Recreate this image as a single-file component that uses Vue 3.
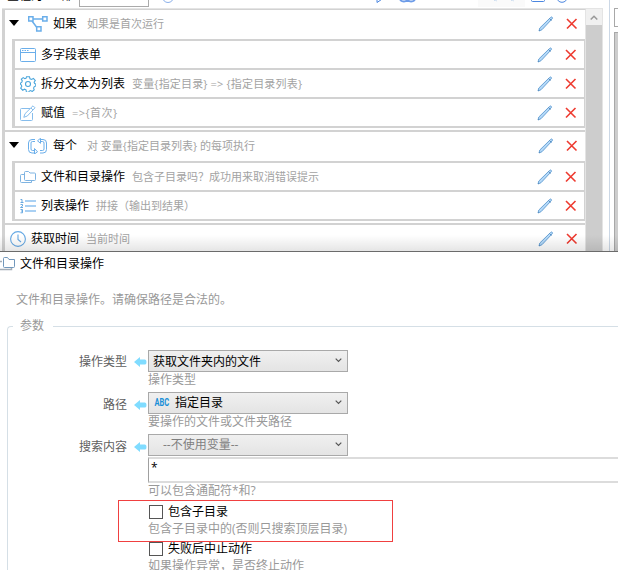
<script setup>
const groups = [
  {
    icon: 'branch', name: '如果', note: '如果是首次运行', noteW: 77,
    children: [
      { icon: 'window', name: '多字段表单', note: '', noteW: 0 },
      { icon: 'gear', name: '拆分文本为列表', note: '变量{指定目录} => {指定目录列表}', noteW: 170 },
      { icon: 'edit', name: '赋值', note: '=>{首次}', noteW: 45 }
    ]
  },
  {
    icon: 'loop', name: '每个', note: '对 变量{指定目录列表} 的每项执行', noteW: 168,
    children: [
      { icon: 'folders', name: '文件和目录操作', note: '包含子目录吗？成功用来取消错误提示', noteW: 187 },
      { icon: 'list', name: '列表操作', note: '拼接（输出到结果）', noteW: 99 }
    ]
  },
  { icon: 'clock', name: '获取时间', note: '当前时间', noteW: 44, children: [] }
]
const fields = [
  { label: '操作类型', value: '获取文件夹内的文件', hint: '操作类型', kind: 'plain' },
  { label: '路径', value: '指定目录', hint: '要操作的文件或文件夹路径', kind: 'variable' },
  { label: '搜索内容', value: '--不使用变量--', hint: '可以包含通配符*和?', kind: 'muted', input: '*' }
]
const checks = [
  { label: '包含子目录', hint: '包含子目录中的(否则只搜索顶层目录)', marked: true },
  { label: '失败后中止动作', hint: '如果操作异常，是否终止动作', marked: false }
]
const icons = {
  branch: '<g fill="none" stroke="#6aaeea" stroke-width="1.500"><path d="M5 3h10M4 5l6 8"/><path d="M.7.7h4.300v4.300H.7zM14.700.7h4.300v4.300h-4.300zM8.700 10.700h4.300v4.300H8.700z" fill="#fff"/></g>',
  loop: '<g fill="none" stroke="#6aaeea" stroke-width="1"><path d="M7 1.500H4Q.5 1.500.5 5v6.500Q.5 15 4 15h2.500M7 3.500H4.500Q3 3.500 3 5v6q0 1.500 1.500 1.500h2M6.500 10.500l3 3.300-3 2.200z"/><path d="M12 15h3q3.500 0 3.500-3.500V5q0-3.500-3.500-3.500h-2.500M12 12.500h2.500Q16 12.500 16 11V5q0-1.500-1.500-1.500h-2M12.500.300v5l-3-2.500z"/></g>',
  window: '<g fill="none" stroke="#6aaeea"><rect x=".5" y="1.500" width="15" height="13" rx="1"/><path d="M1 5.500h14"/><path d="M2 3.500h7" stroke-dasharray="1.500 1"/></g>',
  gear: '<g fill="none" stroke="#4ba6dc" stroke-width="1.100"><path d="M6.500.8h3l.5 2 1.500.7 1.900-1 1.900 2.100-1.200 1.700.6 1.200 1.100.5v2l-1.500.6-.7 1.500.6 1.700-2 1.700-1.600-1-1.300.6-.8 1.300H6.500L6 13.800l-1.500-.6-1.800 1-2-2 1.100-1.900-.6-1.400L.5 8.300V7l1.200-.6.6-1.500-1-1.800L3.200 1.600l1.600 1.100L6 2.300z"/><circle cx="8" cy="8" r="2.500"/></g>',
  edit: '<g fill="none" stroke="#86bdec"><path d="M10 3.500H1.500q-1 0-1 1v10q0 1 1 1h10q1 0 1-1V8"/><path d="M13 .800l2 2-7.700 8.200-3.500 1.300L5 8.700zM11 3l2 2"/></g>',
  folders: '<g fill="none" stroke="#7fb4e2"><path d="M4.500 10.500v-7q0-1 1-1h3L10 4h4.500q1 0 1 1v5.500q0 1-1 1h-9q-1 0-1-1z"/><path d="M4 5.500H1.500q-1 0-1 1v6q0 1 1 1h10V12"/></g>',
  list: '<path d="M5 2h11v2H5zM5 7h11v2H5zM5 12h11v2H5z" fill="#a9d0f3"/><path d="M.5 1.500H2v3M.5 4.500h3M.5 6.500h2v1.500l-2 1.500h2.500M.5 11.500h2v3.300h-2M1 13h1.500" fill="none" stroke="#5aa0dc" stroke-width=".9"/>',
  clock: '<g fill="none" stroke="#66a9e4" stroke-width="1.100"><circle cx="8" cy="8" r="7.400"/><path d="M8 3.500v5l3 2.500"/></g>'
}
const isWide = n => n === 'branch' || n === 'loop'
</script>

<template>
  <div class="screen">
    <section class="workspace">
      <div class="editor">
        <header class="toolbar">
          <span class="tool-title">全程为 少 部:</span>
          <span class="tool-box"></span>
          <svg class="tool-left" width="14" height="8" viewBox="0 0 14 8"><circle cx="7" cy="-3" r="5.500" fill="none" stroke="#8bb0ea" /></svg>
          <svg class="tool-right" width="210" height="8" viewBox="0 0 210 8">
            <path d="M5-2v4.500l6-4" fill="none" stroke="#4b86e0" />
            <path d="M28 0q4 3 7.500 0 3.500 3 7.500 0" fill="none" stroke="#6d9ce8" stroke-width="1.800" />
            <path d="M106 0h47v7h-47z" fill="#fafafa" />
            <path d="M122 1l1-1 2 1M139 1l1-1 2 1" fill="none" stroke="#d0dff0" />
            <path d="M159.500 0v.5q0 1 1 1h11q1 0 1-1V0" fill="none" stroke="#4b86e0" />
            <circle cx="190" cy="-3" r="5.300" fill="none" stroke="#4b86e0" />
          </svg>
        </header>
        <div class="list-area">
          <div class="steps">
            <div v-for="g in groups" :key="g.name" class="group">
              <div class="row" :class="{ leaf: !g.children.length, parent: g.children.length }">
                <svg v-if="g.children.length" class="caret" width="10" height="6" viewBox="0 0 10 6"><path d="M0 0h10L5 6z" fill="#000" /></svg>
                <svg class="glyph" :width="isWide(g.icon) ? 20 : 16" height="16" :viewBox="isWide(g.icon) ? '0 0 20 16' : '0 0 16 16'" v-html="icons[g.icon]"></svg>
                <span class="name">{{ g.name }}</span>
                <svg class="note" :width="g.noteW" height="16"><text x="0" y="12" :textLength="g.noteW">{{ g.note }}</text></svg>
                <span class="actions">
                  <svg width="16" height="16" viewBox="0 0 16 16"><path d="M1 15l.8-3L12.500 1.500q1-1 1.700-.2t-.2 1.700L4 13.700z" fill="#b5d9f8" stroke="#6aa3d6" /><path d="M11.500 2.500l2 2M1 15l1-1" stroke="#5c8fc0" /></svg>
                  <svg width="12" height="12" viewBox="0 0 12 12"><path d="M1 1l9.500 9.500M10.500 1L1 10.500" stroke="#ee3b30" stroke-width="1.600" /></svg>
                </span>
              </div>
              <div v-if="g.children.length" class="nested">
                <div v-for="c in g.children" :key="c.name" class="row child">
                  <svg class="glyph" width="16" height="16" viewBox="0 0 16 16" v-html="icons[c.icon]"></svg>
                  <span class="name">{{ c.name }}</span>
                  <svg v-if="c.note" class="note" :width="c.noteW" height="16"><text x="0" y="12" :textLength="c.noteW">{{ c.note }}</text></svg>
                  <span class="actions">
                    <svg width="16" height="16" viewBox="0 0 16 16"><path d="M1 15l.8-3L12.500 1.500q1-1 1.700-.2t-.2 1.700L4 13.700z" fill="#b5d9f8" stroke="#6aa3d6" /><path d="M11.500 2.500l2 2M1 15l1-1" stroke="#5c8fc0" /></svg>
                    <svg width="12" height="12" viewBox="0 0 12 12"><path d="M1 1l9.500 9.500M10.500 1L1 10.500" stroke="#ee3b30" stroke-width="1.600" /></svg>
                  </span>
                </div>
              </div>
            </div>
          </div>
          <div class="scrollbar">
            <div class="scroll-up"><svg width="8" height="5" viewBox="0 0 8 5"><path d="M.7 4.500L4 1.200l3.300 3.300" fill="none" stroke="#999" stroke-width="1.500" /></svg></div>
            <div class="thumb"></div>
          </div>
        </div>
      </div>
      <aside class="side">
        <div class="side-input"></div>
        <div class="side-panel"></div>
      </aside>
      <div class="shade"></div>
    </section>

    <section class="dialog">
      <header class="title">
        <svg width="16" height="16" viewBox="0 0 16 16"><g fill="none" stroke="#7197bb"><path d="M3.500 10.500v-8q0-1 1-1h3L9 3.500h5.500v7q0 1-1 1h-9q-1 0-1-1z" /><path d="M0 5.500h2M0 13.500h11.500V12" stroke="#a4adb6" stroke-width="1.500" /></g></svg>
        <span>文件和目录操作</span>
      </header>
      <p class="intro">文件和目录操作。请确保路径是合法的。</p>
      <div class="params">
        <div class="legend"><span class="corner"></span><span class="legend-text">参数</span><span class="rule"></span></div>
        <div class="form">
          <div v-for="f in fields" :key="f.label" class="field">
            <div class="control">
              <label>{{ f.label }}</label>
              <svg class="arrow" width="13" height="10" viewBox="0 0 13 10"><path d="M0 5l6-5v2.500h5q1.500 0 1.500 2.500T11 7.500H6V10z" fill="#80dcff" /></svg>
              <div class="select" :class="f.kind">
                <span v-if="f.kind === 'variable'" class="type-tag">ABC</span>
                <span class="value">{{ f.value }}</span>
                <svg class="chev" width="7" height="5" viewBox="0 0 7 5"><path d="M.7.7l2.800 2.800L6.300.7" fill="none" stroke="#555" stroke-width="1.200" /></svg>
              </div>
            </div>
            <div v-if="f.input" class="input">{{ f.input }}</div>
            <div class="hint">{{ f.hint }}</div>
          </div>
          <div v-for="c in checks" :key="c.label" class="check">
            <div class="check-line"><span class="box"></span><span>{{ c.label }}</span></div>
            <div class="hint">{{ c.hint }}</div>
            <div v-if="c.marked" class="marker"></div>
          </div>
        </div>
      </div>
    </section>
  </div>
</template>

<style>
body { margin: 0; background: #fff; overflow: hidden; }
</style>

<style scoped>
.screen { width: 618px; height: 570px; overflow: hidden; background: #fff; font: 12px/16px "Open Sans", "Noto Sans CJK SC", sans-serif; color: #000; white-space: nowrap; }
.screen * { box-sizing: border-box; }
svg { display: block; flex: none; }
.workspace { position: relative; display: flex; height: 252px; overflow: hidden; border-bottom: 1px solid #6b6b6b; }
.editor { width: 610px; height: 252px; border-right: 1px solid #ccd8e6; }
.toolbar { display: flex; align-items: flex-start; height: 8px; overflow: hidden; }
.tool-title { width: 72px; padding-left: 7px; margin-top: -12px; }
.tool-box { width: 70px; height: 7px; margin-left: 7px; border: 1px solid #aaa; border-top: 0; }
.tool-left { margin-left: 12px; }
.tool-right { margin-left: 197px; }
.list-area { display: flex; height: 244px; margin-left: 2px; width: 601px; border-top: 1px solid #e4e4e4; border-right: 1px solid #e4e4e4; }
.steps { width: 584px; border-left: 3px solid #d2d2d2; border-top: 1px solid #d2d2d2; border-right: 1px solid #e4e4e4; }
.group + .group { margin-top: 2px; border-top: 2px solid #d2d2d2; }
.row { display: flex; align-items: center; height: 29px; padding: 0 7px 2px 4px; }
.row.leaf { padding: 0 7px 0 5px; height: 28px; }
.caret { margin-right: 9px; margin-top: -2px; }
.glyph { margin-right: 5px; }
.row .name { margin-top: 1px; }
.row.leaf .name { margin-top: 0; }
.note { margin-left: 7px; overflow: visible; font-size: 11px; fill: #a3a3a3; }
.parent .note { margin-left: 10px; }
.actions { display: flex; align-items: center; gap: 12px; margin-left: auto; }
.nested { margin-left: 7px; border: 2px solid #d2d2d2; border-left-width: 3px; border-right-width: 1px; }
.row.child { height: 27px; padding: 0 7px 0 5px; }
.row.child + .row.child { height: 29px; border-top: 2px solid #d2d2d2; }
.scrollbar { width: 16px; }
.scroll-up { display: flex; align-items: center; justify-content: center; height: 16px; background: #f0f0f0; }
.thumb { height: 227px; background: #cdcdcd; }
.side { width: 4px; margin-left: 4px; padding-top: 8px; }
.side-input { height: 19px; border: 1px solid #a8a8a8; border-right: 0; }
.side-panel { height: 220px; margin-top: 5px; background: #cdcdcd; border: 1px solid #a8a8a8; border-right: 0; }
.shade { position: absolute; left: 0; right: 0; bottom: 0; height: 16px; background: linear-gradient(rgba(0,0,0,0), rgba(0,0,0,.1)); }
.title { display: flex; align-items: center; gap: 4px; height: 24px; }
.intro { margin: 0; padding: 16px 0 0 16px; color: #999; }
.params { margin-left: 7px; }
.legend { display: flex; align-items: flex-start; height: 18px; margin-top: 10px; color: #999; }
.corner { width: 6px; height: 10px; margin-top: 8px; border: solid #d5dfe6; border-width: 1px 0 0 1px; border-radius: 4px 0 0 0; }
.legend-text { width: 40px; padding-left: 7px; }
.rule { flex: 1; height: 1px; margin-top: 8px; background: #d5dfe6; }
.form { height: 236px; border-left: 1px solid #d5dfe6; padding-top: 14px; }
.field { height: 42px; }
.field:nth-child(3) { height: 69px; }
.control { display: flex; align-items: center; height: 22px; }
label { width: 119px; padding-top: 2px; text-align: right; color: #606060; }
.field:nth-child(n+2) label { padding-top: 4px; }
.arrow { margin: 2px 1px 0 7px; }
.field:nth-child(n+2) .arrow { margin-top: 4px; }
.select { display: flex; align-items: center; width: 200px; height: 22px; padding: 0 5px 0 4px; border: 1px solid #a9a9a9; background: linear-gradient(#f0f0f0, #e4e4e4); }
.select.muted { padding-left: 14px; color: #808080; }
.value { padding-top: 1px; }
.select.muted .value, .select.variable .value { padding-top: 0; }
.type-tag { width: 22px; padding-left: 2px; font: bold 10px/16px "Roboto", sans-serif; color: #1990d8; transform: scaleX(.75); transform-origin: left; }
.chev { margin-left: auto; margin-top: -2px; }
.hint { height: 16px; margin-left: 140px; color: #999; }
.input { height: 26px; margin: 1px 0 0 140px; padding: 1px 2px; border: 2px solid #dcdcdc; border-left: 1px solid #a0a0a0; border-right: 0; }
.check { position: relative; height: 37px; }
.check-line { display: flex; align-items: center; gap: 5px; height: 18px; margin-left: 141px; }
.box { width: 14px; height: 14px; border: 1px solid #555; }
.marker { position: absolute; left: 110px; top: -3px; width: 275px; height: 42px; border: 1px solid #f04040; }
</style>
